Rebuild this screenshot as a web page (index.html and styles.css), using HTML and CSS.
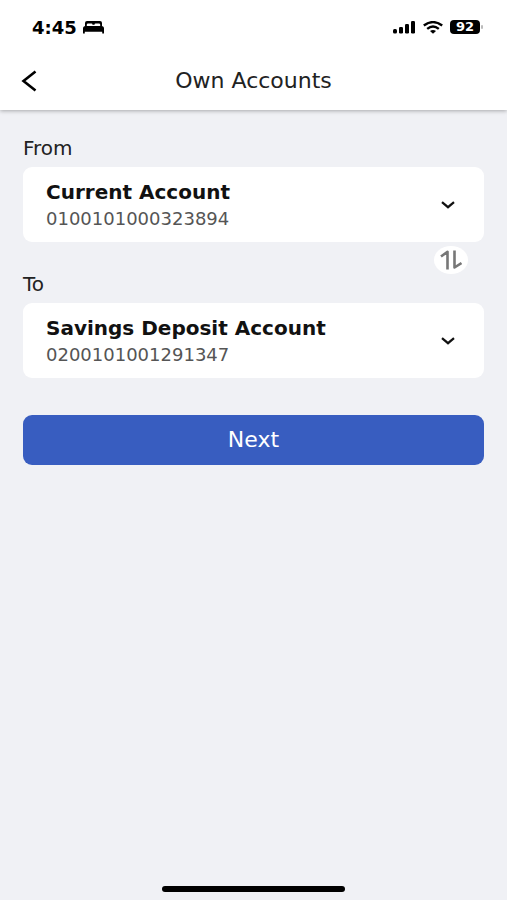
FILE: index.html
```html
<!DOCTYPE html>
<html lang="en">
<head>
<meta charset="utf-8">
<meta name="viewport" content="width=device-width, initial-scale=1">
<title>Own Accounts</title>
<link rel="stylesheet" href="styles.css">
</head>
<body>
<header class="top">
  <div class="status">
    <div class="status-group">
      <span class="time">4:45</span>
      <svg width="21" height="13" viewBox="0 0 21 13" aria-hidden="true"><path d="M2 5V2Q2 0 4 0H17Q19 0 19 2V5H17.2V3.6Q17 2.4 16 2.4H12.500Q11.500 2.400 11.500 3.800H9.500Q9.500 2.400 8.500 2.400H5Q4 2.400 3.800 3.600V5Z"/><path d="M0 12.500V7.500Q0 5 2.500 5H18.500Q21 5 21 7.500V12.500H19.200V10.800H1.800V12.500Z"/></svg>
    </div>
    <div class="status-group status-icons">
      <svg width="23" height="13" viewBox="0 0 23 13" aria-hidden="true"><rect x="0" y="8" width="4" height="4.500" rx="1.5"/><rect x="6" y="6" width="4" height="6.500" rx="1.2"/><rect x="12" y="3" width="4" height="9.500" rx="1.2"/><rect x="18" y="0" width="4" height="12.500" rx="1.2"/></svg>
      <svg width="20" height="13" viewBox="0 0 20 13" aria-hidden="true"><g fill="none" stroke="#000" stroke-width="2.4"><path d="M.8 4.500Q10-2.300 19.200 4.500"/><path d="M4.200 7.900Q10 3.200 15.800 7.900"/></g><path d="M7 10Q10 7.800 13 10L10 12.800Z"/></svg>
      <span class="battery">92</span>
    </div>
  </div>
  <div class="titlebar">
    <button class="back" type="button" aria-label="Back">
      <svg width="16" height="22" viewBox="0 0 16 22" aria-hidden="true"><path d="M14.500 1.500L2.500 11L14.500 20.500" fill="none" stroke="#000" stroke-width="2.6"/></svg>
    </button>
    <h1>Own Accounts</h1>
  </div>
</header>
<main>
  <form class="transfer">
    <div class="label-row">
      <label for="from">From</label>
    </div>
    <button class="account" id="from" type="button" aria-haspopup="listbox">
      <span class="details"><span class="name">Current Account</span><span class="number">0100101000323894</span></span>
      <svg width="14" height="8" viewBox="0 0 14 8" aria-hidden="true"><path d="M1 1.200L7 6.200L13 1.200" fill="none" stroke="#111" stroke-width="2.2"/></svg>
    </button>
    <div class="label-row label-row-swap">
      <label for="to">To</label>
      <button class="swap" type="button" aria-label="Swap accounts">
        <svg width="22" height="20" viewBox="0 0 22 20" aria-hidden="true"><g fill="none" stroke="#777" stroke-width="2.6" stroke-linejoin="round"><path d="M1 6.500L7.500 1.800V19.500"/><path d="M14.500 .5V17.500L21.500 13"/></g></svg>
      </button>
    </div>
    <button class="account" id="to" type="button" aria-haspopup="listbox">
      <span class="details"><span class="name">Savings Deposit Account</span><span class="number">0200101001291347</span></span>
      <svg width="14" height="8" viewBox="0 0 14 8" aria-hidden="true"><path d="M1 1.200L7 6.200L13 1.200" fill="none" stroke="#111" stroke-width="2.2"/></svg>
    </button>
    <button class="next" type="submit">Next</button>
  </form>
</main>
<footer><div class="home-bar"></div></footer>
</body>
</html>
```
FILE: styles.css
```css
* {
  box-sizing: border-box;
}

body {
  margin: 0;
  min-height: 100vh;
  display: flex;
  flex-direction: column;
  background: #f0f1f5;
  color: #222;
  font-family: "DejaVu Sans", sans-serif;
}

button {
  font: inherit;
  border: 0;
  padding: 0;
  background: none;
}

svg {
  display: block;
  flex: none;
}

.top {
  background: #fff;
  box-shadow: 0 1px 4px rgba(0, 0, 0, 0.3);
}

.status {
  display: flex;
  justify-content: space-between;
  align-items: center;
  height: 54px;
  padding: 0 27px 0 32px;
  color: #000;
}

.status-group {
  display: flex;
  align-items: center;
  gap: 6px;
}

.status-icons {
  gap: 7px;
}

.time {
  font-size: 18px;
  font-weight: 700;
}

.battery {
  width: 30px;
  border-radius: 4px;
  background: #000;
  color: #fff;
  font-size: 13px;
  font-weight: 700;
  line-height: 14px;
  text-align: center;
  position: relative;
}

.battery::after {
  content: "";
  position: absolute;
  right: -3px;
  top: 5px;
  width: 2px;
  height: 4px;
  border-radius: 1px;
  background: #bbb;
}

.titlebar {
  display: grid;
  grid-template-columns: 40px 1fr 40px;
  align-items: center;
  height: 56px;
  padding: 0 21px 2px;
}

.back {
  height: 40px;
}

h1 {
  margin: 0;
  font-size: 22px;
  font-weight: 400;
  line-height: 28px;
  text-align: center;
}

main {
  flex: 1;
  padding: 26px 23px;
}

.transfer {
  display: flex;
  flex-direction: column;
}

.label-row {
  display: flex;
  justify-content: space-between;
  align-items: flex-end;
  padding-bottom: 7px;
}

.label-row label {
  font-size: 20px;
  line-height: 24px;
}

.label-row-swap {
  padding-top: 4px;
}

.swap {
  display: flex;
  align-items: center;
  justify-content: center;
  width: 34px;
  height: 28px;
  margin: 0 16px 22px 0;
  border-radius: 50%;
  background: #fff;
}

.account {
  display: flex;
  align-items: center;
  justify-content: space-between;
  padding: 11px 29px 11px 23px;
  border-radius: 9px;
  background: #fff;
  text-align: left;
}

.details {
  display: flex;
  flex-direction: column;
}

.name {
  color: #111;
  font-size: 20px;
  font-weight: 700;
  line-height: 28px;
}

.number {
  color: #555;
  font-size: 18px;
  line-height: 25px;
}

.next {
  margin-top: 37px;
  border-radius: 9px;
  background: #385dc0;
  color: #fff;
  font-size: 22px;
  line-height: 50px;
}

footer {
  display: flex;
  justify-content: center;
  padding-bottom: 8px;
}

.home-bar {
  width: 36%;
  height: 6px;
  border-radius: 3px;
  background: #000;
}
```
